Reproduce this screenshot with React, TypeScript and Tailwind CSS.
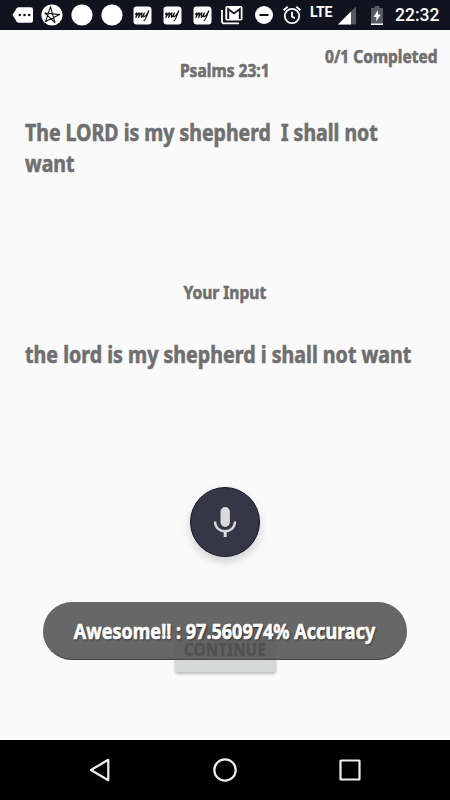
import type { ReactNode } from 'react';

const narrow = 'inline-block whitespace-pre [-webkit-text-stroke:0.6px_currentColor]';
const verseText = 'text-[22.5px] leading-[30.5px]';

function Badge({ children }: { children?: ReactNode }) {
  return (
    <svg width="22" height="22" viewBox="0 0 22 22" className="shrink-0">
      <circle cx="11" cy="11" r="10.6" fill="#fff" />
      {children}
    </svg>
  );
}

function MyIcon() {
  return (
    <svg width="19" height="19" viewBox="0 0 19 19" className="shrink-0">
      <rect x="0.5" y="0.5" width="18" height="18" rx="3.2" fill="#fff" />
      <path
        d="M2.3 8.2 L3.9 6.9 L2.9 11.6 C4.3 8.6 5.3 7 6.3 6.9 L5.7 11.6 C6.8 8.6 8 7 8.9 6.9 L8.3 11.3 C9 11.6 10.2 9.6 11.3 6.8 C10.6 9.2 10.4 10.8 11.1 10.8 C12.6 10.4 14.3 7.8 15.8 4.8 C14.5 8.2 12.7 13.8 11 14.8"
        fill="none"
        stroke="#111"
        strokeWidth="1.15"
        strokeLinecap="round"
        strokeLinejoin="round"
      />
    </svg>
  );
}

function StatusBar() {
  return (
    <header className="flex h-[30px] w-full shrink-0 items-center bg-[#10121d]">
      {/* Notifications */}
      <svg width="22" height="18" viewBox="0 0 22 18" className="ml-3 shrink-0">
        <path d="M6.5 1.2 H19 Q21 1.2 21 3.2 V14.8 Q21 16.8 19 16.8 H6.5 Q5.4 16.8 4.7 15.7 L0.5 9 L4.7 2.3 Q5.4 1.2 6.5 1.2Z" fill="#fff" />
        <g fill="#10121d">
          <circle cx="7.8" cy="9" r="1.3" />
          <circle cx="12.5" cy="9" r="1.3" />
          <circle cx="17.2" cy="9" r="1.3" />
        </g>
      </svg>
      <div className="ml-[7px] flex gap-2">
        <Badge>
          <path d="M9.5 2.6 L13.9 18.6 L3.9 9 L18.6 10.6 L4.6 17.6 Z" fill="none" stroke="#111" strokeWidth="1.1" strokeLinejoin="round" />
        </Badge>
        <Badge />
        <Badge />
      </div>
      <div className="ml-[10px] flex gap-[11px]">
        <MyIcon />
        <MyIcon />
        <MyIcon />
      </div>
      <svg width="22" height="20" viewBox="0 0 22 20" className="ml-[9px] shrink-0">
        <path d="M1 5 V16.2 Q1 18.4 3.2 18.4 H18" fill="none" stroke="#fff" strokeWidth="1.8" />
        <rect x="4.3" y="1" width="17.2" height="14.6" rx="1.8" fill="#fff" />
        <path d="M7.2 14 V4.1 L13 8.4 L18.8 4.1 V14" fill="none" stroke="#10121d" strokeWidth="1.9" />
      </svg>
      <svg width="18" height="18" viewBox="0 0 18 18" className="ml-[12px] shrink-0">
        <circle cx="9" cy="9" r="9" fill="#fff" />
        <rect x="4.5" y="8" width="9" height="2" fill="#10121d" />
      </svg>
      {/* System state */}
      <svg width="20" height="20" viewBox="0 0 20 20" className="ml-[9px] shrink-0" fill="none" stroke="#fff" strokeWidth="1.8">
        <circle cx="10" cy="11" r="7.2" />
        <path d="M1.5 5.2 L5.7 1.7 M18.5 5.2 L14.3 1.7 M10 6.8 V11.4 L13 13.2" />
      </svg>
      <span className="mb-[7px] ml-[8px] w-[23px] font-['Roboto',sans-serif] text-[14px] leading-none font-bold tracking-[-0.1px] text-white">LTE</span>
      <svg width="19" height="19" viewBox="0 0 19 19" className="ml-[5px] shrink-0">
        <path d="M0 18.5 L18 0.5 V18.5Z" fill="#575962" />
        <path d="M0 18.5 L13 5.5 V18.5Z" fill="#fff" />
      </svg>
      <svg width="12" height="19" viewBox="0 0 12 19" className="ml-[14px] shrink-0">
        <path d="M0 2 H3.5 V0 H8.5 V2 H12 V19 H0Z" fill="#575962" />
        <path d="M0 17.5 H12 V19 H0Z M7 4 L2.5 11 H5.3 V15.5 L9.7 8.6 H7Z" fill="#fff" />
      </svg>
      <span className="mt-px ml-[12px] font-['Roboto',sans-serif] text-[17.5px] leading-none font-medium text-white">22:32</span>
    </header>
  );
}

function NavBar() {
  return (
    <nav className="flex h-[60px] shrink-0 items-center justify-between bg-black px-[87px]">
      <svg width="26" height="26" viewBox="0 0 26 26" fill="none" stroke="#eee" strokeWidth="2.2" strokeLinejoin="round">
        <path d="M4 13 L21.3 2.8 V23.2Z" />
      </svg>
      <svg width="26" height="26" viewBox="0 0 26 26" fill="none" stroke="#eee" strokeWidth="2.2">
        <circle cx="13" cy="13" r="10.7" />
      </svg>
      <svg width="26" height="26" viewBox="0 0 26 26" fill="none" stroke="#eee" strokeWidth="2.2">
        <rect x="3.5" y="3.5" width="19" height="19" rx="0.5" />
      </svg>
    </nav>
  );
}

export default function App() {
  return (
    <div className="flex h-[800px] w-[450px] flex-col overflow-hidden bg-[#fafafa] font-['Noto_Sans',sans-serif] font-bold text-[#6f6f6f]">
      <StatusBar />
      <main className="relative flex flex-1 flex-col items-center">
        <p className={`mt-[13px] mr-[12px] origin-right scale-x-[0.862] self-end text-[18px] leading-[26px] ${narrow}`}>0/1 Completed</p>
        <h1 className={`-mt-[12px] scale-x-[0.866] text-[18px] leading-[26px] ${narrow}`}>Psalms 23:1</h1>
        <p className={`mt-[35px] ml-[25px] h-[61px] origin-left scale-x-[0.866] self-start ${verseText} ${narrow}`}>{'The LORD is my shepherd  I shall not\nwant'}</p>
        <h2 className={`mt-[100px] scale-x-[0.866] text-[18px] leading-[26px] ${narrow}`}>Your Input</h2>
        <p className={`mt-[35px] ml-[25px] origin-left scale-x-[0.873] self-start ${verseText} ${narrow}`}>the lord is my shepherd i shall not want</p>

        <button className="mt-[116px] flex size-[70px] shrink-0 items-center justify-center rounded-full border border-[#12142a] bg-[#353746] shadow-[0_5px_10px_rgba(0,0,0,0.16)]">
          <svg width="24" height="32" viewBox="0 0 24 32" fill="#d9d9dc">
            <rect x="7.5" y="1" width="9.4" height="20" rx="4.7" />
            <path d="M2 15.5 C2 28.5 22 28.5 22 15.5" fill="none" stroke="#d9d9dc" strokeWidth="2.4" />
            <path d="M10.7 24.5 H13.7 V31 H10.7Z" />
          </svg>
        </button>
        <button className="mt-[70px] h-[45px] w-[101px] shrink-0 rounded-[3px] bg-[#d6d8d7] text-[18px] text-[#222] shadow-[0_2px_3px_rgba(0,0,0,0.25)]">
          <span className={`scale-x-[0.855] ${narrow}`}>CONTINUE</span>
        </button>

        {/* Toast */}
        <div className="absolute top-[572px] left-[43px] flex h-[58px] w-[364px] items-center justify-center rounded-full border-b border-[#444] bg-[#565656]/90 text-[21px] text-white [text-shadow:1px_1px_2px_rgba(0,0,0,0.7)]">
          <span className={`mt-[2px] scale-x-[0.859] ${narrow}`}>Awesome!! : 97.560974% Accuracy</span>
        </div>
      </main>
      <NavBar />
    </div>
  );
}
